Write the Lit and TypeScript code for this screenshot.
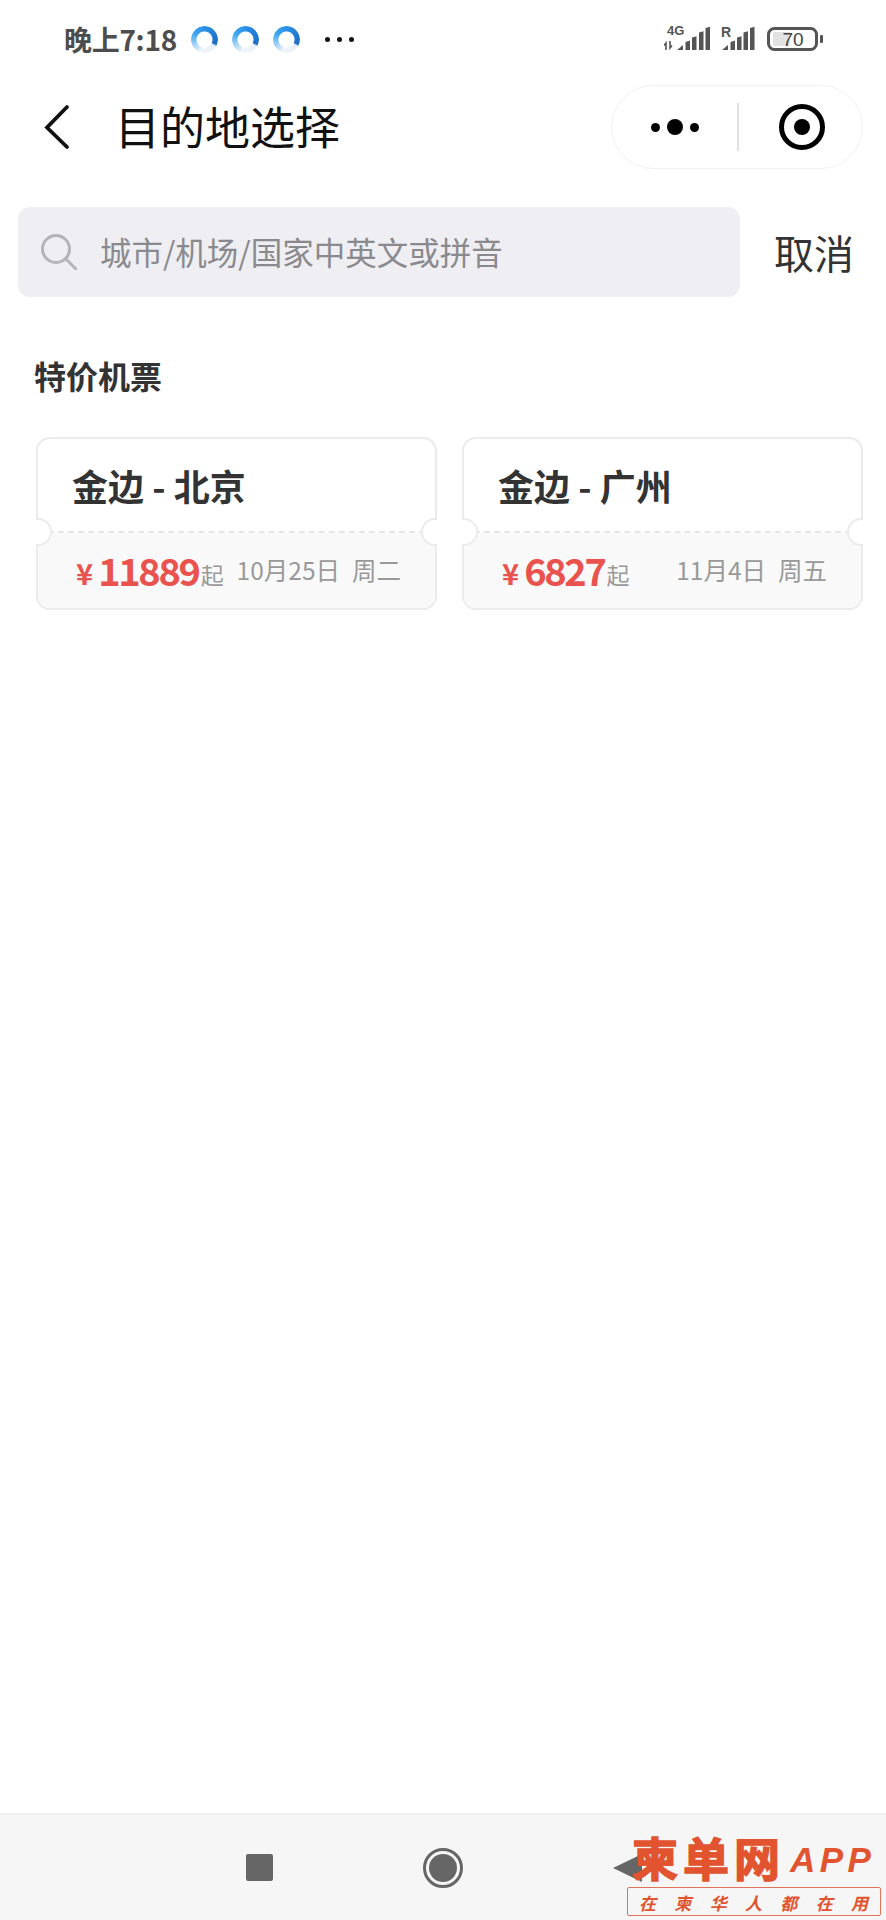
import { LitElement, html, css } from "lit";
import { customElement } from "lit/decorators.js";

@customElement("app-root")
export class AppRoot extends LitElement {
  static styles = css`
    :host { display: block; width: 886px; height: 1920px; background: #fff; position: relative; overflow: hidden; font-family: "Noto Sans CJK SC", "Noto Sans", sans-serif; color: #333; }
    .page { display: flex; flex-direction: column; height: 100%; }
    .status { height: 78px; display: flex; align-items: center; padding-left: 64px; flex: none; }
    .time { font-size: 28px; font-weight: 700; color: #4d4d4d; line-height: 1; width: 127px; white-space: nowrap; letter-spacing: -0.3px; }
    .ring { width: 27px; height: 27px; border-radius: 50%; margin-right: 14px; flex: none;
      background: conic-gradient(#2a90e8 0deg, #1c6cc4 112deg, #e6eff9 122deg, #f3f6fa 195deg, #a8d5f5 240deg, #3ea5ef 300deg, #2a90e8 360deg);
      -webkit-mask: radial-gradient(circle, transparent 7.5px, #000 8.5px);
      mask: radial-gradient(circle, transparent 7.5px, #000 8.5px); }
    .more { display: flex; gap: 7px; margin-left: 11px; }
    .more i { width: 5px; height: 5px; border-radius: 50%; background: #111; }
    .sys { margin-left: auto; margin-right: 62px; display: block; }
    .nav { height: 98px; display: flex; align-items: center; flex: none; padding-right: 23px; }
    .back { margin-left: 42px; width: 28px; height: 46px; flex: none; }
    .title { margin-left: 45px; font-size: 45px; font-weight: 400; color: #111; line-height: 1; white-space: nowrap; position: relative; top: -2px; }
    .capsule { margin-left: auto; width: 252px; height: 84px; box-sizing: border-box; border: 1.5px solid #f1f1f1; border-radius: 42px; display: flex; align-items: center; }
    .dots { width: 125px; display: flex; align-items: center; justify-content: center; gap: 7px; }
    .dots i { width: 9px; height: 9px; background: #000; border-radius: 50%; }
    .dots i.big { width: 16px; height: 16px; }
    .sep { width: 2px; height: 48px; background: #e0e0e0; }
    .target { flex: 1; display: flex; justify-content: center; padding-left: 2px; }
    .search-row { display: flex; align-items: center; margin-top: 31px; padding-left: 18px; flex: none; }
    .search { width: 722px; height: 90px; background: #eeeef3; border-radius: 12px; display: flex; align-items: center; flex: none; }
    .search svg { margin-left: 23px; flex: none; }
    .ph { margin-left: 23px; font-size: 31.5px; color: #8a8a8e; line-height: 1; white-space: nowrap; }
    .cancel { margin-left: 34px; font-size: 40px; color: #333; line-height: 1; }
    .section { margin: 56px 0 0 34px; font-size: 32px; font-weight: 700; color: #333; line-height: 44px; flex: none; }
    .cards { display: grid; grid-template-columns: 401px 401px; gap: 25px; margin: 40px 0 0 36px; flex: none; }
    .card { position: relative; height: 173px; box-sizing: border-box; border: 2px solid #ebebeb; border-radius: 14px; display: flex; flex-direction: column; }
    .top { height: 94px; box-sizing: border-box; border-bottom: 2px dashed #e6e6e6; padding-left: 34px; display: flex; align-items: center; flex: none; }
    .route { font-size: 36px; font-weight: 700; color: #333; line-height: 1; white-space: nowrap; }
    .bottom { flex: 1; background: #f9f9f9; border-radius: 0 0 12px 12px; display: flex; align-items: center; padding: 0 34px 0 38px; white-space: nowrap; }
    .yen { font-size: 29px; font-weight: 700; color: #ea534d; margin-right: 5px; line-height: 1; padding-top: 3px; }
    .price { font-size: 38px; font-weight: 700; color: #ea534d; letter-spacing: -2.3px; line-height: 1; position: relative; top: -1px; }
    .from { font-size: 23px; color: #999; line-height: 1; padding-top: 8px; margin-left: 2px; }
    .date { margin-left: auto; font-size: 24.5px; color: #999; line-height: 1; display: flex; gap: 12px; }
    .notch { position: absolute; top: 79px; width: 16px; height: 28px; box-sizing: border-box; background: #fff; border: 2px solid #ebebeb; }
    .notch.l { left: -2px; border-left: none; border-radius: 0 14px 14px 0; }
    .notch.r { right: -2px; border-right: none; border-radius: 14px 0 0 14px; }
    .spacer { flex: 1; }
    .sysnav { height: 107px; flex: none; box-sizing: border-box; border-top: 2px solid #efefef; background: #f6f6f6; display: grid; grid-template-columns: repeat(3, 184px); justify-content: center; align-items: center; justify-items: center; }
    .square { width: 27px; height: 27px; background: #666; border-radius: 2px; }
    .mark { position: absolute; left: 627px; top: 1830px; width: 254px; color: #e2532f; }
    .brand { display: flex; align-items: center; height: 52px; padding-left: 5px; }
    .brand b { font-size: 46px; font-weight: 700; line-height: 1; letter-spacing: 5px; white-space: nowrap; -webkit-text-stroke: 1.5px #e2532f; }
    .brand em { font-family: "Liberation Sans", sans-serif; font-size: 35px; font-weight: 700; letter-spacing: 4.5px; margin-left: 5px; line-height: 1; white-space: nowrap; position: relative; top: 3px; }
    .slogan { margin-top: 5px; height: 29px; box-sizing: border-box; border: 1px solid #e2735a; border-radius: 2px; display: flex; justify-content: space-between; align-items: center; padding: 1px 12px 0 11px; font-size: 17px; font-style: italic; font-weight: 700; line-height: 1; }
  `;

  private ring() {
    return html`<span class="ring"></span>`;
  }

  private card(route: string, price: string, date: string, week: string) {
    return html`<div class="card">
      <div class="top"><span class="route">${route}</span></div>
      <div class="bottom">
        <span class="yen">¥</span><span class="price">${price}</span><span class="from">起</span>
        <span class="date"><span>${date}</span><span>${week}</span></span>
      </div>
      <i class="notch l"></i><i class="notch r"></i>
    </div>`;
  }

  render() {
    return html`<div class="page">
      <div class="status">
        <span class="time">晚上7:18</span>
        ${this.ring()}${this.ring()}${this.ring()}
        <span class="more"><i></i><i></i><i></i></span>
        <svg class="sys" width="160" height="30" viewBox="664 25 160 30" fill="#555">
          <text x="667" y="36" font-size="13" font-weight="700" font-family="Liberation Sans, sans-serif">4G</text>
          <path d="M666 51v-7l-2 2.500M670 42v7l2-2.500" fill="none" stroke="#555" stroke-width="1.6"/>
          <path d="M677 51l6-5v5zM685.500 43l4.500-1.500V51h-4.500zM692 38.500l4.500-1.200V51H692zM699 33.500l4.500-1.200V51H699zM705.500 29l4.500-1.200V51h-4.500z"/>
          <text x="721" y="38" font-size="14" font-weight="700" font-family="Liberation Sans, sans-serif">R</text>
          <path d="M722 51l6-5v5zM730.500 43l4.500-1.500V51h-4.500zM737 38.500l4.500-1.200V51H737zM743.500 33.500l4.500-1.200V51h-4.500zM750 29l4.500-1.200V51H750z"/>
          <rect x="773" y="33" width="17" height="14" rx="1" fill="#e2e2e2"/>
          <rect x="768.500" y="29.500" width="48" height="21" rx="6" fill="none" stroke="#555" stroke-width="3"/>
          <rect x="820" y="36" width="3" height="8" rx="1"/>
          <text x="793" y="47" text-anchor="middle" font-size="19" fill="#444" font-family="Liberation Sans, sans-serif">70</text>
        </svg>
      </div>
      <div class="nav">
        <svg class="back" viewBox="0 0 28 46" fill="none"><path d="M25 3 5 23.500 25 43" stroke="#111" stroke-width="3.800" stroke-linecap="round" stroke-linejoin="miter"/></svg>
        <span class="title">目的地选择</span>
        <div class="capsule">
          <div class="dots"><i></i><i class="big"></i><i></i></div>
          <span class="sep"></span>
          <div class="target"><svg width="46" height="46" viewBox="0 0 46 46"><circle cx="23" cy="23" r="20.500" fill="none" stroke="#000" stroke-width="5"/><circle cx="23" cy="23" r="8" fill="#000"/></svg></div>
        </div>
      </div>
      <div class="search-row">
        <div class="search">
          <svg width="36" height="36" viewBox="0 0 36 36" fill="none" stroke="#b4b4b6" stroke-width="3"><circle cx="15" cy="15" r="13.500"/><path d="M25 25 35 35" stroke-linecap="round"/></svg>
          <span class="ph">城市/机场/国家中英文或拼音</span>
        </div>
        <span class="cancel">取消</span>
      </div>
      <div class="section">特价机票</div>
      <div class="cards">
        ${this.card("金边 - 北京", "11889", "10月25日", "周二")}
        ${this.card("金边 - 广州", "6827", "11月4日", "周五")}
      </div>
      <div class="spacer"></div>
      <div class="sysnav">
        <span class="square"></span>
        <svg width="40" height="40" viewBox="0 0 40 40"><circle cx="20" cy="20" r="18.500" fill="none" stroke="#666" stroke-width="3"/><circle cx="20" cy="20" r="14" fill="#666"/></svg>
        <svg width="32" height="32" viewBox="0 0 32 32"><path d="M2 16 29 3a1 1 0 0 1 2 1v24a1 1 0 0 1-2 1z" fill="#666"/></svg>
      </div>
    </div>
    <div class="mark">
      <div class="brand"><b>柬单网</b><em>APP</em></div>
      <div class="slogan"><span>在</span><span>柬</span><span>华</span><span>人</span><span>都</span><span>在</span><span>用</span></div>
    </div>`;
  }
}
